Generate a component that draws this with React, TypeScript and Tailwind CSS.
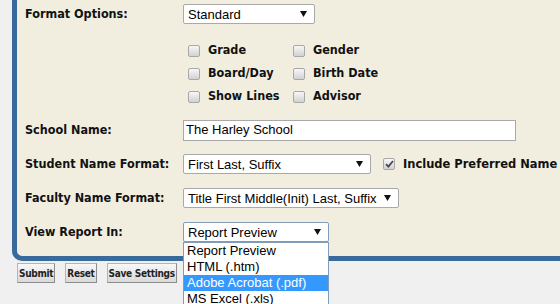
import React from "react";

const labelFont = { fontFamily: '"DejaVu Sans Condensed", "DejaVu Sans", sans-serif' };
const fieldFont = { fontFamily: '"Liberation Sans", Arial, sans-serif' };

const Arrow = () => (
  <svg width="7" height="6" viewBox="0 0 7 6" className="shrink-0">
    <polygon points="0,0 7,0 3.5,6" fill="#111" />
  </svg>
);

const Select = ({ value, width, focused }: { value: string; width: string; focused?: boolean }) => (
  <div
    className={`flex items-center justify-between h-[20px] bg-white border rounded-[2px] pl-[4px] pr-[7px] text-[13px] text-black ${width} ${
      focused ? "border-[#7f9db9]" : "border-[#a9a9a9]"
    }`}
    style={fieldFont}
  >
    <span className="leading-none whitespace-nowrap">{value}</span>
    <Arrow />
  </div>
);

const Box = ({ checked }: { checked?: boolean }) => (
  <span className="flex items-center justify-center w-[12px] h-[12px] shrink-0 rounded-[2px] border border-[#a8a8a8] bg-gradient-to-b from-[#f7f7f7] to-[#d2d2d2]">
    {checked && (
      <svg width="9" height="8" viewBox="0 0 9 8">
        <path d="M1 4.2 L3.4 6.6 L8 1" stroke="#4a4a4a" strokeWidth="1.8" fill="none" />
      </svg>
    )}
  </span>
);

const Check = ({ label }: { label: string }) => (
  <div className="flex items-center h-[23px] w-[105px] gap-[8px]">
    <Box />
    <span className="text-[12.5px] font-bold text-[#111] whitespace-nowrap" style={labelFont}>
      {label}
    </span>
  </div>
);

const Row = ({ label, children, h = "h-[34px]" }: { label: string; children: React.ReactNode; h?: string }) => (
  <div className={`flex items-center ${h}`}>
    <div className="w-[158px] shrink-0 text-[12.5px] font-bold text-[#111]" style={labelFont}>
      {label}
    </div>
    {children}
  </div>
);

const Button = ({ children }: { children: React.ReactNode }) => (
  <button
    className="h-[20px] px-[1px] text-[10px] tracking-[-0.3px] font-bold text-[#222] border border-[#b4b4b4] border-r-[#8c8c8c] border-b-[#8c8c8c] bg-gradient-to-b from-[#f8f8f8] to-[#d9d9d9] whitespace-nowrap"
    style={labelFont}
  >
    {children}
  </button>
);

export default function App() {
  const options = ["Report Preview", "HTML (.htm)", "Adobe Acrobat (.pdf)", "MS Excel (.xls)"];
  return (
    <div className="relative w-[560px] h-[304px] overflow-hidden bg-[#f0f0f0] pl-[12px]">
      <div className="w-[600px] bg-[#f1eee0] border-l-[5px] border-b-[5px] border-[#386a9b] rounded-bl-[10px] pl-[8px] pb-[7px]">
        <Row label="Format Options:" h="h-[28px]">
          <Select value="Standard" width="w-[132px]" />
        </Row>
        <div className="ml-[163px] mt-[11px] flex flex-col">
          <div className="flex">
            <Check label="Grade" />
            <Check label="Gender" />
          </div>
          <div className="flex">
            <Check label="Board/Day" />
            <Check label="Birth Date" />
          </div>
          <div className="flex">
            <Check label="Show Lines" />
            <Check label="Advisor" />
          </div>
        </div>
        <div className="mt-[5px]">
          <Row label="School Name:">
            <div
              className="flex items-center h-[21px] w-[333px] bg-white border border-[#a9a9a9] pl-[2px] text-[13px] text-black"
              style={fieldFont}
            >
              The Harley School
            </div>
          </Row>
          <Row label="Student Name Format:">
            <Select value="First Last, Suffix" width="w-[188px]" />
            <div className="flex items-center gap-[8px] ml-[12px]">
              <Box checked />
              <span className="text-[12.75px] font-bold text-[#111] whitespace-nowrap" style={labelFont}>
                Include Preferred Name
              </span>
            </div>
          </Row>
          <Row label="Faculty Name Format:">
            <Select value="Title First Middle(Init) Last, Suffix" width="w-[216px]" />
          </Row>
          <Row label="View Report In:">
            <div className="relative">
              <Select value="Report Preview" width="w-[146px]" focused />
              <div
                className="absolute left-0 top-[20px] z-10 w-[146px] h-[80px] bg-white border border-[#7f9db9] text-[13px] text-black"
                style={fieldFont}
              >
                {options.map((o, i) => (
                  <div
                    key={o}
                    className={`h-[16px] leading-[16px] pl-[3px] whitespace-nowrap ${
                      i === 2 ? "bg-[#3399ff] text-white" : ""
                    }`}
                  >
                    {o}
                  </div>
                ))}
              </div>
            </div>
          </Row>
        </div>
      </div>
      <div className="flex gap-[10px] ml-[5px] mt-[2px]">
        <Button>Submit</Button>
        <Button>Reset</Button>
        <Button>Save Settings</Button>
      </div>
    </div>
  );
}
